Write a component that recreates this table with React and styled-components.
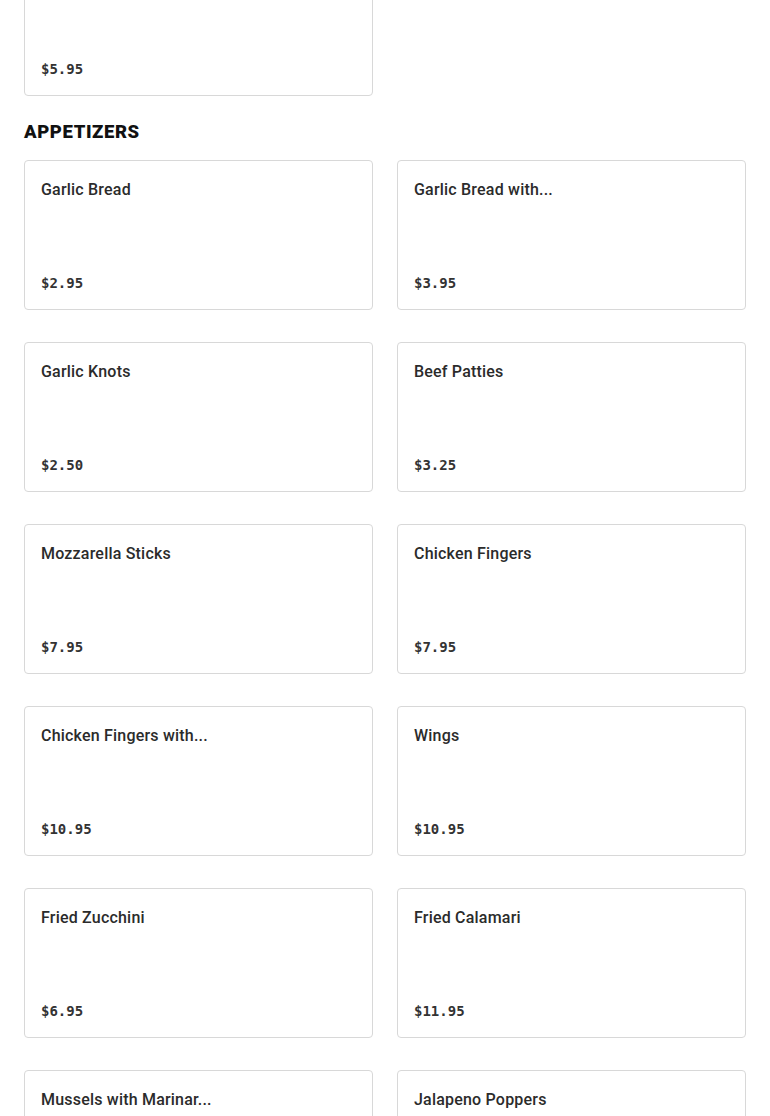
import React from 'react';
import styled, { createGlobalStyle } from 'styled-components';

const prevItems = [{ name: '', price: '$5.95' }];

const appetizers = [
    { name: 'Garlic Bread', price: '$2.95' },
    { name: 'Garlic Bread with...', price: '$3.95' },
    { name: 'Garlic Knots', price: '$2.50' },
    { name: 'Beef Patties', price: '$3.25' },
    { name: 'Mozzarella Sticks', price: '$7.95' },
    { name: 'Chicken Fingers', price: '$7.95' },
    { name: 'Chicken Fingers with...', price: '$10.95' },
    { name: 'Wings', price: '$10.95' },
    { name: 'Fried Zucchini', price: '$6.95' },
    { name: 'Fried Calamari', price: '$11.95' },
    { name: 'Mussels with Marinar...', price: '$12.95' },
    { name: 'Jalapeno Poppers', price: '$7.95' },
];

function App() {
    return (
        <>
            <GlobalStyle />
            <StPage>
                <StGrid>
                    {prevItems.map((item, i) => (
                        <MenuCard key={i} item={item} />
                    ))}
                </StGrid>
                <StHeading>APPETIZERS</StHeading>
                <StGrid>
                    {appetizers.map((item) => (
                        <MenuCard key={item.name} item={item} />
                    ))}
                </StGrid>
            </StPage>
        </>
    );
}

function MenuCard({ item }) {
    return (
        <StCard>
            <StName>{item.name}</StName>
            <StPrice>{item.price}</StPrice>
        </StCard>
    );
}

export default App;

const GlobalStyle = createGlobalStyle`
    body {
        margin: 0;
        background: #ffffff;
        font-family: 'Liberation Sans', Arial, sans-serif;
        overflow: hidden;
    }
`;

const StPage = styled.div`
    margin-top: -54px;
    padding: 0 24px 40px;
`;

const StGrid = styled.div`
    display: grid;
    grid-template-columns: repeat(2, 1fr);
    column-gap: 24px;
    row-gap: 32px;
`;

const StHeading = styled.h2`
    margin: 25px 0 17px;
    font-family: Roboto, 'Liberation Sans', Arial, sans-serif;
    font-size: 18.5px;
    line-height: 22px;
    font-weight: 900;
    color: #111111;
    letter-spacing: 0.6px;
`;

const StCard = styled.div`
    height: 150px;
    box-sizing: border-box;
    padding: 17px 16px 16px;
    border: 1px solid #d8d8d8;
    border-radius: 4px;
    display: flex;
    flex-direction: column;
    justify-content: space-between;
    background: #ffffff;
`;

const StName = styled.div`
    font-family: Roboto, 'Liberation Sans', Arial, sans-serif;
    font-size: 16px;
    line-height: 24px;
    font-weight: 500;
    color: #2b2b2b;
    letter-spacing: 0.2px;
    min-height: 24px;
`;

const StPrice = styled.div`
    font-family: 'DejaVu Sans Mono', 'Liberation Mono', monospace;
    font-size: 14px;
    line-height: 20px;
    font-weight: 700;
    color: #333333;
`;
